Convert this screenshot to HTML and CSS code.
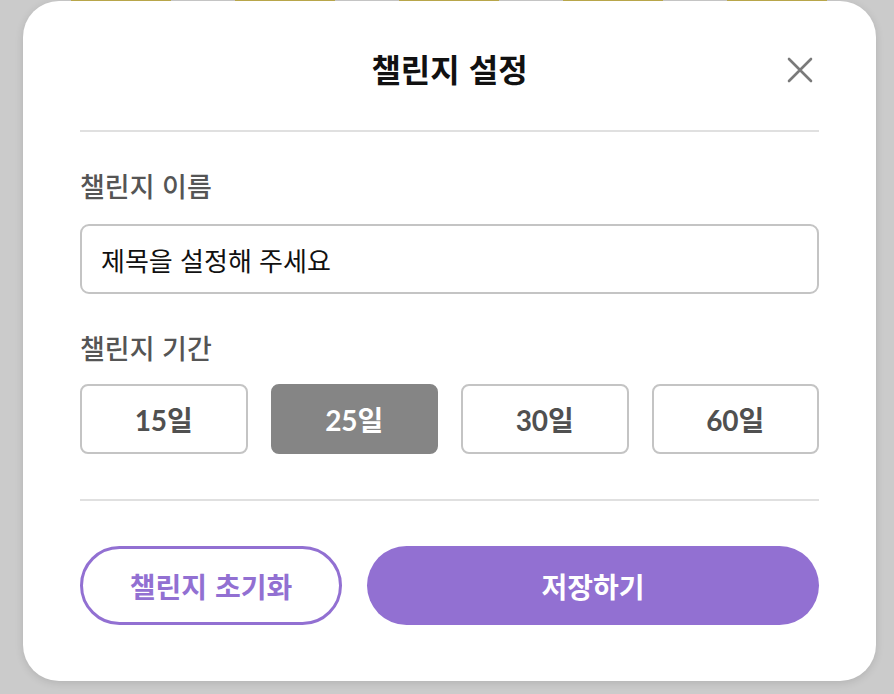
FILE: index.html
```html
<!DOCTYPE html>
<html lang="ko">
<head>
<meta charset="utf-8">
<link rel="stylesheet" href="styles.css">
</head>
<body>
<div class="backdrop-strip">
  <span class="seg"></span><span class="seg"></span><span class="seg"></span><span class="seg"></span><span class="seg"></span>
</div>
<div class="modal">
  <div class="header">
    <h1 class="title">챌린지 설정</h1>
    <button class="close" aria-label="닫기">
      <svg width="26" height="26" viewBox="0 0 26 26"><path d="M2 2 L24 24 M24 2 L2 24" stroke="#7a7a7a" stroke-width="2.6" stroke-linecap="round" fill="none"/></svg>
    </button>
  </div>
  <div class="body">
    <div class="label first">챌린지 이름</div>
    <div class="input">제목을 설정해 주세요</div>
    <div class="label second">챌린지 기간</div>
    <div class="periods">
      <div class="period">15일</div>
      <div class="period active">25일</div>
      <div class="period">30일</div>
      <div class="period">60일</div>
    </div>
  </div>
  <div class="footer">
    <button class="btn reset">챌린지 초기화</button>
    <button class="btn save">저장하기</button>
  </div>
</div>
</body>
</html>
```
FILE: styles.css
```css
* { box-sizing: border-box; }
html, body { margin: 0; padding: 0; }
body {
  background: #cbcbcb;
  width: 894px;
  height: 694px;
  overflow: hidden;
  font-family: "Noto Sans CJK KR", "Noto Sans", sans-serif;
}
.backdrop-strip {
  height: 1px;
  display: flex;
  gap: 64px;
  padding-left: 71px;
}
.seg {
  display: block;
  width: 100px;
  height: 1px;
  background: #b8a64a;
}
.modal {
  margin-left: 23px;
  width: 853px;
  height: 680px;
  background: #fff;
  border-radius: 36px;
  padding: 0 57px;
  box-shadow: 0 2px 8px rgba(0,0,0,0.12);
}
.header {
  position: relative;
  height: 131px;
  padding-top: 4px;
  border-bottom: 2px solid #e0e0e0;
  display: flex;
  align-items: center;
  justify-content: center;
}
.title {
  margin: 0;
  font-size: 32px;
  font-weight: 700;
  color: #111;
  line-height: 40px;
}
.close {
  position: absolute;
  right: 6px;
  top: 56px;
  width: 26px;
  height: 26px;
  padding: 0;
  border: 0;
  background: none;
  display: flex;
}
.label {
  font-size: 27px;
  line-height: 32px;
  font-weight: 500;
  color: #555;
}
.label.first { margin-top: 38px; }
.label.second { margin-top: 38px; }
.input {
  margin-top: 22px;
  height: 70px;
  border: 2px solid #c4c4c4;
  border-radius: 9px;
  padding: 0 19px;
  display: flex;
  align-items: center;
  font-size: 26px;
  color: #111;
}
.periods {
  margin-top: 20px;
  display: grid;
  grid-template-columns: repeat(4, 1fr);
  gap: 23px;
}
.period {
  height: 70px;
  border: 2px solid #c4c4c4;
  border-radius: 8px;
  display: flex;
  align-items: center;
  justify-content: center;
  font-family: Lato, "Noto Sans CJK KR", sans-serif;
  font-size: 28px;
  font-weight: 700;
  color: #505050;
}
.period.active {
  background: #858585;
  border-color: #858585;
  color: #fff;
}
.footer {
  margin-top: 45px;
  border-top: 2px solid #e0e0e0;
  padding-top: 45px;
  display: flex;
  gap: 25px;
}
.btn {
  height: 79px;
  border-radius: 40px;
  font-family: "Noto Sans CJK KR", sans-serif;
  font-size: 28px;
  font-weight: 700;
  display: flex;
  align-items: center;
  justify-content: center;
  padding: 0;
}
.reset {
  width: 262px;
  background: #fff;
  border: 3px solid #9270d2;
  color: #9270d2;
}
.save {
  flex: 1;
  background: #9270d2;
  border: 0;
  color: #fff;
}
```
